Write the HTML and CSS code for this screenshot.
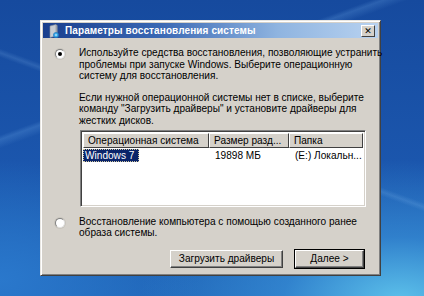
FILE: index.html
```html
<!DOCTYPE html>
<html lang="ru">
<head>
<meta charset="utf-8">
<link rel="stylesheet" href="styles.css">
</head>
<body>
<div class="desktop">
  <div class="dialog">
    <div class="titlebar">
      <svg class="ticon" width="12" height="14" viewBox="0 0 12 14">
        <path d="M2 2 L8 0.5 L8 12 L2 13.5 Z" fill="#c8ccd2" stroke="#8a9098" stroke-width="0.6"/>
        <path d="M8 0.5 L9.5 1.5 L9.5 11.5 L8 12 Z" fill="#9aa0a8"/>
        <circle cx="8" cy="11" r="2.6" fill="#38a8e8" stroke="#1a70b8" stroke-width="0.6"/>
        <circle cx="8" cy="11" r="0.8" fill="#ffffff"/>
      </svg>
      <span class="ttext">Параметры восстановления системы</span>
      <span class="close">✕</span>
    </div>
    <div class="content">
      <div class="option first">
        <span class="radio checked"></span>
        <div class="otext">
          <p class="para">Используйте средства восстановления, позволяющие устранить<br>проблемы при запуске Windows. Выберите операционную<br>систему для восстановления.</p>
          <p class="para second">Если нужной операционной системы нет в списке, выберите<br>команду "Загрузить драйверы" и установите драйверы для<br>жестких дисков.</p>
          <div class="listview">
            <div class="lhead">
              <span class="hcell c1">Операционная система</span>
              <span class="hcell c2">Размер разд...</span>
              <span class="hcell c3">Папка</span>
            </div>
            <div class="lrow">
              <span class="cell c1"><span class="sel">Windows 7</span></span>
              <span class="cell c2">19898 МБ</span>
              <span class="cell c3">(E:) Локальн...</span>
            </div>
          </div>
        </div>
      </div>
      <div class="option second-opt">
        <span class="radio"></span>
        <div class="otext">
          <p class="para">Восстановление компьютера с помощью созданного ранее<br>образа системы.</p>
        </div>
      </div>
      <div class="buttons">
        <button class="btn">Загрузить драйверы</button>
        <button class="btn default">Далее &gt;</button>
      </div>
    </div>
  </div>
</div>
</body>
</html>
```
FILE: styles.css
```css
html, body {
  margin: 0;
  padding: 0;
}
body {
  width: 424px;
  height: 296px;
  overflow: hidden;
  font-family: "Liberation Sans", "DejaVu Sans", sans-serif;
}
.desktop {
  width: 424px;
  height: 296px;
  padding-top: 20px;
  padding-left: 40px;
  box-sizing: border-box;
  background:
    linear-gradient(160deg, transparent 0 30%, rgba(140,200,255,0.18) 31%, transparent 33%),
    linear-gradient(200deg, transparent 0 45%, rgba(160,210,255,0.15) 46%, transparent 47%),
    radial-gradient(ellipse 260px 140px at 400px 300px, #5cc0ea 0%, rgba(60,150,220,0.6) 45%, rgba(30,90,180,0) 100%),
    radial-gradient(ellipse 200px 120px at 0px 280px, #2a78cc 0%, rgba(30,90,180,0) 100%),
    linear-gradient(180deg, #164a9e 0%, #1b56ad 55%, #2066b8 100%);
}
.dialog {
  width: 341px;
  height: 256px;
  box-sizing: border-box;
  background: #d5d1ca;
  border: 1px solid;
  border-color: #e8e6e2 #404040 #404040 #e8e6e2;
  box-shadow: inset 1px 1px 0 #ffffff, inset -1px -1px 0 #808080;
  padding: 2px;
  display: flex;
  flex-direction: column;
}
.titlebar {
  height: 15px;
  display: flex;
  align-items: center;
  padding: 0 3px 0 5px;
  background: linear-gradient(90deg, #1a3f8e 0%, #3a68b4 35%, #8fb4e0 70%, #b8d2f0 100%);
  color: #ffffff;
}
.ticon {
  flex: none;
  margin-right: 5px;
}
.ttext {
  font-weight: bold;
  font-size: 10px;
  flex: 1;
  letter-spacing: 0.1px;
}
.close {
  width: 12px;
  height: 10px;
  background: #d5d1ca;
  color: #000;
  font-size: 9px;
  font-weight: bold;
  line-height: 10px;
  text-align: center;
  border: 1px solid;
  border-color: #ffffff #404040 #404040 #ffffff;
}
.content {
  flex: 1;
  padding: 9px 14px 0 11px;
  display: flex;
  flex-direction: column;
  font-size: 10.1px;
  color: #000;
}
.option {
  display: flex;
  align-items: flex-start;
}
.radio {
  flex: none;
  width: 8px;
  height: 8px;
  border-radius: 50%;
  background: #ffffff;
  border: 1px solid;
  border-color: #808080 #e0e0e0 #e0e0e0 #808080;
  box-shadow: 0 0 0 1px #c8c4bc;
  margin: 2px 14px 0 1px;
  position: relative;
}
.radio.checked::after {
  content: "";
  position: absolute;
  left: 2px;
  top: 2px;
  width: 4px;
  height: 4px;
  border-radius: 50%;
  background: #000;
}
.otext {
  flex: 1;
}
.para {
  margin: 0;
  line-height: 11.6px;
  white-space: nowrap;
}
.para.second {
  margin-top: 10px;
}
.listview {
  margin-top: 3px;
  margin-left: 1px;
  width: 286px;
  height: 77px;
  box-sizing: border-box;
  background: #ffffff;
  border: 1px solid;
  border-color: #808080 #ffffff #ffffff #808080;
  box-shadow: inset 1px 1px 0 #404040, inset -1px -1px 0 #d5d1ca;
  padding: 2px;
}
.lhead {
  display: flex;
  height: 15px;
}
.hcell {
  box-sizing: border-box;
  height: 15px;
  line-height: 13px;
  background: #d5d1ca;
  border: 1px solid;
  border-color: #ffffff #404040 #404040 #ffffff;
  padding-left: 4px;
  white-space: nowrap;
  overflow: hidden;
}
.c1 { width: 126px; flex: none; }
.c2 { width: 80px; flex: none; }
.c3 { flex: 1; }
.lrow {
  display: flex;
  height: 14px;
  line-height: 13px;
  margin-top: 1px;
}
.cell {
  box-sizing: border-box;
  padding-left: 6px;
  white-space: nowrap;
}
.cell.c1 {
  padding-left: 0;
}
.sel {
  display: inline-block;
  background: #0a246a;
  color: #ffffff;
  padding: 0 4px 0 2px;
  width: 50px;
  outline: 1px dotted #d0c8a0;
  outline-offset: -1px;
}
.second-opt {
  margin-top: 9px;
}
.buttons {
  display: flex;
  justify-content: flex-end;
  gap: 12px;
  margin-top: 11px;
}
.btn {
  font-family: inherit;
  font-size: 10.1px;
  height: 18px;
  padding: 0;
  background: #d5d1ca;
  color: #000;
  border: 1px solid;
  border-color: #ffffff #404040 #404040 #ffffff;
  box-shadow: inset -1px -1px 0 #808080;
}
.btn:first-child {
  width: 113px;
}
.btn.default {
  width: 69px;
  outline: 1px solid #000;
  outline-offset: 0;
}
```
